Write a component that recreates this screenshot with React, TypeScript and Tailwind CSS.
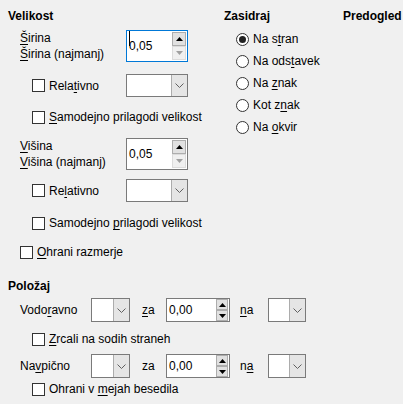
import React from 'react';

const U = ({ children }: { children: React.ReactNode }) => (
  <span className="underline decoration-1 underline-offset-[2px]">{children}</span>
);

const Check = () => (
  <span className="w-[13px] h-[13px] border border-[#333333] bg-white shrink-0" />
);

const Radio = ({ checked }: { checked?: boolean }) => (
  <span className="w-[13px] h-[13px] rounded-full border border-[#333333] bg-white shrink-0 flex items-center justify-center">
    {checked && <span className="w-[7px] h-[7px] rounded-full bg-[#222222]" />}
  </span>
);

const Tri = ({ up, color }: { up?: boolean; color: string }) => (
  <svg width="7" height="4" viewBox="0 0 7 4">
    <path d={up ? 'M0 4 L3.5 0 L7 4 Z' : 'M0 0 L3.5 4 L7 0 Z'} fill={color} />
  </svg>
);

const Chevron = () => (
  <svg width="9" height="5" viewBox="0 0 9 5">
    <path d="M0.5 0.5 L4.5 4.5 L8.5 0.5" stroke="#606060" strokeWidth="1" fill="none" />
  </svg>
);

function Spin({ value, big, focused, downOff }: { value: string; big?: boolean; focused?: boolean; downOff?: boolean }) {
  return (
    <div
      className={`flex items-center bg-white border ${focused ? 'border-[#0078d7]' : 'border-[#7a7a7a]'} ${
        big ? 'w-[62px] h-[32px]' : 'w-[64px] h-[24px]'
      }`}
    >
      <div className="flex-1 pl-[2px] flex items-center relative">
        {focused && <span className="absolute left-[2px] top-[-7px] w-px h-[15px] bg-black" />}
        <span>{value}</span>
      </div>
      <div className="flex flex-col mr-[1px]">
        <div
          className={`${big ? 'w-[14px] h-[14px]' : 'w-[12px] h-[11px]'} border border-[#adadad] bg-[#e1e1e1] flex items-center justify-center`}
        >
          <Tri up color="#000" />
        </div>
        <div
          className={`${big ? 'w-[14px] h-[14px]' : 'w-[12px] h-[11px]'} border ${
            downOff ? 'border-[#dcdcdc] bg-[#f0f0f0]' : 'border-[#adadad] bg-[#e1e1e1]'
          } flex items-center justify-center`}
        >
          <Tri color={downOff ? '#a0a0a0' : '#000'} />
        </div>
      </div>
    </div>
  );
}

function Combo({ w, h }: { w: string; h: string }) {
  return (
    <div className={`flex bg-white border border-[#7a7a7a] ${w} ${h}`}>
      <div className="flex-1" />
      <div className="w-[16px] bg-[#e5e5e5] border-l border-[#acacac] flex items-center justify-center">
        <Chevron />
      </div>
    </div>
  );
}

export default function App() {
  return (
    <div className="w-[403px] h-[404px] bg-[#f0f0f0] pl-2 pt-2 text-[12px] leading-4 text-black font-['Liberation_Sans',Arial,sans-serif] overflow-hidden">
      <div className="flex">
        {/* size */}
        <div className="w-[216px] flex flex-col">
          <div className="h-4 font-bold">Velikost</div>

          <div className="mt-[6px] h-[32px] flex items-center">
            <div className="w-[118px] pl-3 flex flex-col">
              <span>
                <U>Š</U>irina
              </span>
              <span>
                <U>Š</U>irina (najmanj)
              </span>
            </div>
            <Spin value="0,05" big focused downOff />
          </div>

          <div className="mt-3 h-[23px] flex items-center">
            <div className="w-[118px] pl-6 flex items-center gap-1">
              <Check />
              <span>
                Rela<U>t</U>ivno
              </span>
            </div>
            <Combo w="w-[62px]" h="h-[23px]" />
          </div>

          <div className="mt-3 h-4 pl-6 flex items-center gap-1">
            <Check />
            <span>
              <U>S</U>amodejno prilagodi velikost
            </span>
          </div>

          <div className="mt-[13px] h-[32px] flex items-center">
            <div className="w-[118px] pl-3 flex flex-col">
              <span>
                <U>V</U>išina
              </span>
              <span>
                <U>V</U>išina (najmanj)
              </span>
            </div>
            <Spin value="0,05" big downOff />
          </div>

          <div className="mt-[9px] h-[23px] flex items-center">
            <div className="w-[118px] pl-6 flex items-center gap-1">
              <Check />
              <span>
                Re<U>l</U>ativno
              </span>
            </div>
            <Combo w="w-[62px]" h="h-[23px]" />
          </div>

          <div className="mt-[13px] h-4 pl-6 flex items-center gap-1">
            <Check />
            <span>
              Samodejno <U>p</U>rilagodi velikost
            </span>
          </div>

          <div className="mt-[13px] h-4 pl-3 flex items-center gap-1">
            <Check />
            <span>
              <U>O</U>hrani razmerje
            </span>
          </div>
        </div>

        {/* anchor */}
        <div className="w-[119px] flex flex-col">
          <div className="h-4 font-bold">Zasidraj</div>
          <div className="mt-1 flex flex-col">
            {[
              [true, <>Na s<U>t</U>ran</>],
              [false, <>Na ods<U>t</U>avek</>],
              [false, <>Na <U>z</U>nak</>],
              [false, <>Kot z<U>n</U>ak</>],
              [false, <>Na <U>o</U>kvir</>],
            ].map(([c, label], i) => (
              <div key={i} className="h-[22px] pl-3 flex items-center gap-1">
                <Radio checked={c as boolean} />
                <span>{label as React.ReactNode}</span>
              </div>
            ))}
          </div>
        </div>

        <div className="font-bold h-4">Predogled</div>
      </div>

      {/* position */}
      <div className="mt-[18px] h-4 font-bold">Položaj</div>

      <div className="mt-1 h-[24px] flex items-center">
        <div className="w-[83px] pl-3">
          Vodo<U>r</U>avno
        </div>
        <Combo w="w-[39px]" h="h-[24px]" />
        <div className="ml-3 w-[24px]">
          <U>z</U>a
        </div>
        <Spin value="0,00" />
        <div className="ml-[10px] w-[28px]">
          <U>n</U>a
        </div>
        <Combo w="w-[38px]" h="h-[24px]" />
      </div>

      <div className="mt-[9px] h-4 pl-6 flex items-center gap-1">
        <Check />
        <span>
          <U>Z</U>rcali na sodih straneh
        </span>
      </div>

      <div className="mt-[7px] h-[24px] flex items-center">
        <div className="w-[83px] pl-3">
          Na<U>v</U>pično
        </div>
        <Combo w="w-[39px]" h="h-[24px]" />
        <div className="ml-3 w-[24px]">za</div>
        <Spin value="0,00" />
        <div className="ml-[10px] w-[28px]">
          n<U>a</U>
        </div>
        <Combo w="w-[38px]" h="h-[24px]" />
      </div>

      <div className="mt-[3px] h-4 pl-6 flex items-center gap-1">
        <Check />
        <span>
          Ohrani v <U>m</U>ejah besedila
        </span>
      </div>
    </div>
  );
}
